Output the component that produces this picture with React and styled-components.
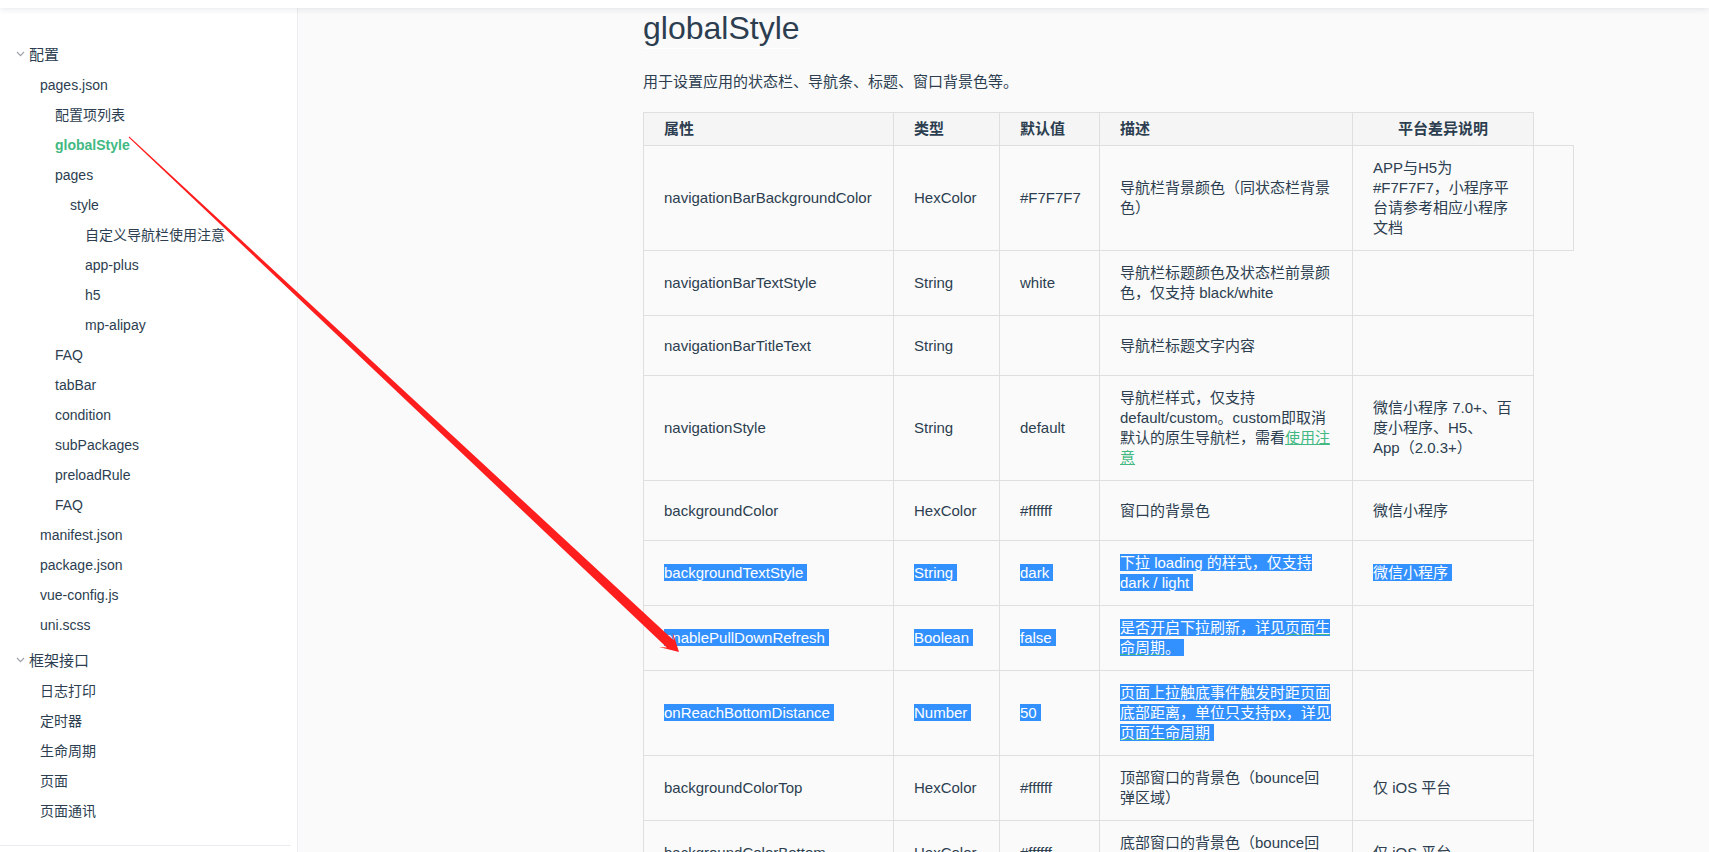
import React from "react";
import styled, { createGlobalStyle } from "styled-components";

const GlobalStyle = createGlobalStyle`
  html, body {
    margin: 0;
    padding: 0;
    height: 100%;
    overflow: hidden;
  }
  body {
    font-family: "Liberation Sans", "Noto Sans CJK SC", sans-serif;
    color: #2c3e50;
    background: #fafafa;
  }
`;

const sideGroups = [
  {
    title: "配置",
    items: [
      ["pages.json", 1],
      ["配置项列表", 2],
      ["globalStyle", 2, true],
      ["pages", 2],
      ["style", 3],
      ["自定义导航栏使用注意", 4],
      ["app-plus", 4],
      ["h5", 4],
      ["mp-alipay", 4],
      ["FAQ", 2],
      ["tabBar", 2],
      ["condition", 2],
      ["subPackages", 2],
      ["preloadRule", 2],
      ["FAQ", 2],
      ["manifest.json", 1],
      ["package.json", 1],
      ["vue-config.js", 1],
      ["uni.scss", 1],
    ],
  },
  {
    title: "框架接口",
    items: [
      ["日志打印", 1],
      ["定时器", 1],
      ["生命周期", 1],
      ["页面", 1],
      ["页面通讯", 1],
    ],
  },
];

const cols = [250, 106, 100, 253, 181, 40];

const rows = [
  {
    name: "navigationBarBackgroundColor",
    type: "HexColor",
    def: "#F7F7F7",
    desc: ["导航栏背景颜色（同状态栏背景色）"],
    plat: ["APP与H5为#F7F7F7，小程序平台请参考相应小程序文档"],
    extra: true,
  },
  {
    name: "navigationBarTextStyle",
    type: "String",
    def: "white",
    desc: ["导航栏标题颜色及状态栏前景颜色，仅支持 black/white"],
    plat: [],
  },
  {
    name: "navigationBarTitleText",
    type: "String",
    def: "",
    desc: ["导航栏标题文字内容"],
    plat: [],
  },
  {
    name: "navigationStyle",
    type: "String",
    def: "default",
    desc: ["导航栏样式，仅支持 default/custom。custom即取消默认的原生导航栏，需看", { link: "使用注意" }],
    plat: ["微信小程序 7.0+、百度小程序、H5、", { keep: "App（2.0.3+）" }],
  },
  {
    name: "backgroundColor",
    type: "HexColor",
    def: "#ffffff",
    desc: ["窗口的背景色"],
    plat: ["微信小程序"],
  },
  {
    name: "backgroundTextStyle",
    type: "String",
    def: "dark",
    desc: ["下拉 loading 的样式，仅支持 dark / light"],
    plat: ["微信小程序"],
    selected: true,
  },
  {
    name: "enablePullDownRefresh",
    type: "Boolean",
    def: "false",
    desc: ["是否开启下拉刷新，详见", { link: "页面生命周期" }, "。"],
    plat: [],
    selected: true,
  },
  {
    name: "onReachBottomDistance",
    type: "Number",
    def: "50",
    desc: ["页面上拉触底事件触发时距页面底部距离，单位只支持px，详见", { link: "页面生命周期" }],
    plat: [],
    selected: true,
  },
  {
    name: "backgroundColorTop",
    type: "HexColor",
    def: "#ffffff",
    desc: ["顶部窗口的背景色（bounce回弹区域）"],
    plat: ["仅 iOS 平台"],
  },
  {
    name: "backgroundColorBottom",
    type: "HexColor",
    def: "#ffffff",
    desc: ["底部窗口的背景色（bounce回弹区域）"],
    plat: ["仅 iOS 平台"],
  },
];

const Cell = ({ selected, children }) => {
  if (!children || (Array.isArray(children) && children.length === 0)) return null;
  return selected ? <Sel>{children}</Sel> : <>{children}</>;
};

// text pieces: plain strings, links, or runs that must not wrap
const renderParts = (parts, selected) =>
  parts.map((p, i) => {
    if (typeof p === "string") return p;
    if (p.keep) return <NoWrap key={i}>{p.keep}</NoWrap>;
    return (
      <DocLink key={i} $sel={selected} href="#">
        {p.link}
      </DocLink>
    );
  });

const Chevron = () => (
  <ChevronIcon width="9" height="6" viewBox="0 0 9 6">
    <path d="M1 1 L4.5 4.6 L8 1" fill="none" stroke="#9aa0a6" strokeWidth="1.1" />
  </ChevronIcon>
);

const App = () => {
  return (
    <Page>
      <GlobalStyle />
      <TopBar />
      <Body>
        <Sidebar>
          {sideGroups.map((g, gi) => (
            <Group key={gi} $first={gi === 0}>
              <GroupTitle>
                <Chevron />
                {g.title}
              </GroupTitle>
              <Items>
                {g.items.map(([label, level, active], i) => (
                  <Item key={i} $level={level} $active={active}>
                    {label}
                  </Item>
                ))}
              </Items>
            </Group>
          ))}
          <Divider />
        </Sidebar>
        <Main>
          <Content>
            <Title>globalStyle</Title>
            <Lead>用于设置应用的状态栏、导航条、标题、窗口背景色等。</Lead>
            <Table>
              <colgroup>
                {cols.map((w, i) => (
                  <Col key={i} $w={w} />
                ))}
              </colgroup>
              <thead>
                <tr>
                  <Th>属性</Th>
                  <Th>类型</Th>
                  <Th>默认值</Th>
                  <Th>描述</Th>
                  <Th $center>平台差异说明</Th>
                </tr>
              </thead>
              <tbody>
                {rows.map((r, i) => (
                  <tr key={i}>
                    <Td>
                      <Cell selected={r.selected}>{r.name}</Cell>
                    </Td>
                    <Td>
                      <Cell selected={r.selected}>{r.type}</Cell>
                    </Td>
                    <Td>
                      <Cell selected={r.selected}>{r.def}</Cell>
                    </Td>
                    <Td>
                      <Cell selected={r.selected}>{renderParts(r.desc, r.selected)}</Cell>
                    </Td>
                    <Td>
                      <Cell selected={r.selected}>{renderParts(r.plat, r.selected)}</Cell>
                    </Td>
                    {r.extra && <Td />}
                  </tr>
                ))}
              </tbody>
            </Table>
          </Content>
        </Main>
      </Body>
      <Annotation width="1709" height="852" viewBox="0 0 1709 852">
        <polygon
          points="128.7,137.4 666.8,647.5 659.1,647 679,652 672.7,632.4 673.6,640.2 129.3,136.6"
          fill="#ff1e1e"
        />
      </Annotation>
    </Page>
  );
};

export default App;

const Page = styled.div`
  position: relative;
  display: flex;
  flex-direction: column;
  width: 1709px;
  height: 852px;
  overflow: hidden;
  background: #fafafa;
`;

const TopBar = styled.div`
  position: relative;
  z-index: 2;
  height: 8px;
  flex-shrink: 0;
  background: #fff;
  box-shadow: 0 1px 6px rgba(40, 60, 90, 0.12);
`;

const Body = styled.div`
  flex: 1;
  display: flex;
  min-height: 0;
`;

const Sidebar = styled.div`
  width: 298px;
  flex-shrink: 0;
  background: #fff;
  border-right: 1px solid #eaecef;
  padding-top: 30px;
  box-sizing: border-box;
`;

const Group = styled.div`
  margin-top: ${(p) => (p.$first ? "0" : "4px")};
`;

const GroupTitle = styled.div`
  display: flex;
  align-items: center;
  height: 30px;
  padding-left: 16px;
  font-size: 15px;
  color: #2c3e50;
`;

const ChevronIcon = styled.svg`
  margin-right: 4px;
  margin-top: 1px;
`;

const Items = styled.div`
  display: flex;
  flex-direction: column;
  margin-top: 2px;
`;

const Item = styled.div`
  height: 30px;
  line-height: 30px;
  font-size: 14px;
  padding-left: ${(p) => 25 + p.$level * 15}px;
  color: ${(p) => (p.$active ? "#42b983" : "#2c3e50")};
  font-weight: ${(p) => (p.$active ? 700 : 400)};
  white-space: nowrap;
`;

const Divider = styled.div`
  margin: 19px 6px 0 0;
  border-top: 1px solid #eaecef;
`;

const Main = styled.div`
  flex: 1;
  min-width: 0;
`;

const Content = styled.div`
  margin-left: 345px;
`;

const Title = styled.h2`
  display: inline-block;
  margin: 0;
  font-size: 32px;
  line-height: 40px;
  font-weight: 400;
  color: #2c3e50;
  border-bottom: 1px solid #ffffff;
`;

const Lead = styled.p`
  margin: 22px 0 20px;
  font-size: 15px;
  line-height: 21px;
  color: #2c3e50;
`;

const Table = styled.table`
  border-collapse: collapse;
  table-layout: fixed;
  width: 930px;
  font-size: 15px;
  line-height: 20px;
  color: #2c3e50;
`;

const Col = styled.col`
  width: ${(p) => p.$w}px;
`;

const Th = styled.th`
  padding: 6px 20px;
  height: 33px;
  box-sizing: border-box;
  border: 1px solid #dfdfdf;
  background: #f5f5f5;
  text-align: ${(p) => (p.$center ? "center" : "left")};
  font-weight: 700;
`;

const Td = styled.td`
  padding: 12px 20px;
  height: 60px;
  box-sizing: border-box;
  border: 1px solid #dfdfdf;
  vertical-align: middle;
  word-break: normal;
`;

const Sel = styled.span`
  background: #3390ff;
  color: #fff;
  padding-right: 4px;
`;

const NoWrap = styled.span`
  white-space: nowrap;
`;

const DocLink = styled.a`
  color: ${(p) => (p.$sel ? "#fff" : "#42b983")};
  text-decoration: underline;
  text-decoration-color: #42b983;
`;

const Annotation = styled.svg`
  position: absolute;
  top: 0;
  left: 0;
  pointer-events: none;
  z-index: 5;
`;
